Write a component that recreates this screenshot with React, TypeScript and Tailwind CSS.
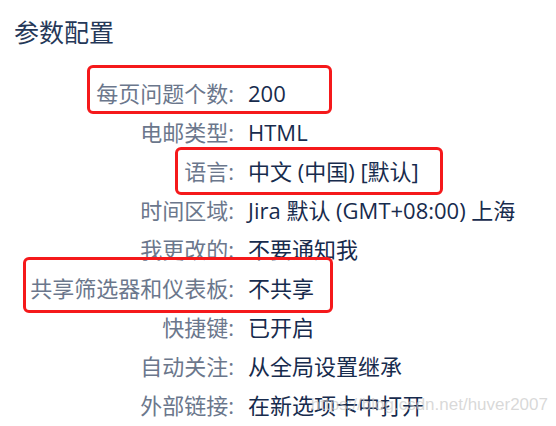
import React from 'react';

const rows: { label: string; value: string }[] = [
  { label: '每页问题个数', value: '200' },
  { label: '电邮类型', value: 'HTML' },
  { label: '语言', value: '中文 (中国) [默认]' },
  { label: '时间区域', value: 'Jira 默认 (GMT+08:00) 上海' },
  { label: '我更改的', value: '不要通知我' },
  { label: '共享筛选器和仪表板', value: '不共享' },
  { label: '快捷键', value: '已开启' },
  { label: '自动关注', value: '从全局设置继承' },
  { label: '外部链接', value: '在新选项卡中打开' },
];

// red annotation boxes drawn over the screenshot
const Mark: React.FC<{ className: string }> = ({ className }) => (
  <div className={`absolute border-[3px] border-[#f5191b] rounded-[6px] pointer-events-none ${className}`} />
);

export default function App() {
  return (
    <div
      className="relative w-[556px] h-[426px] overflow-hidden bg-white"
      style={{ fontFamily: '"Open Sans", "Noto Sans CJK SC", sans-serif' }}
    >
      <h2 className="pl-[14px] pt-[16px] text-[25px] leading-[32px] font-normal text-[#253858]">参数配置</h2>

      <dl className="mt-[26px]">
        {rows.map((r) => (
          <div key={r.label} className="flex h-[39px] items-center text-[22px] leading-[39px]">
            <dt className="w-[234px] shrink-0 text-right text-[#6b778c]">{r.label}:</dt>
            <dd className="ml-[14px] whitespace-nowrap text-[#172b4d]">{r.value}</dd>
          </div>
        ))}
      </dl>

      <Mark className="left-[87px] top-[65px] w-[245px] h-[49px]" />
      <Mark className="left-[175px] top-[147px] w-[268px] h-[48px]" />
      <Mark className="left-[23px] top-[257px] w-[310px] h-[56px]" />

      <div
        className="absolute right-[8px] top-[394px] text-[17px] leading-[22px] text-[#c8c8c8]/70 whitespace-nowrap"
        style={{ fontFamily: '"Liberation Sans", Arial, sans-serif' }}
      >
        https://blog.csdn.net/huver2007
      </div>
    </div>
  );
}
